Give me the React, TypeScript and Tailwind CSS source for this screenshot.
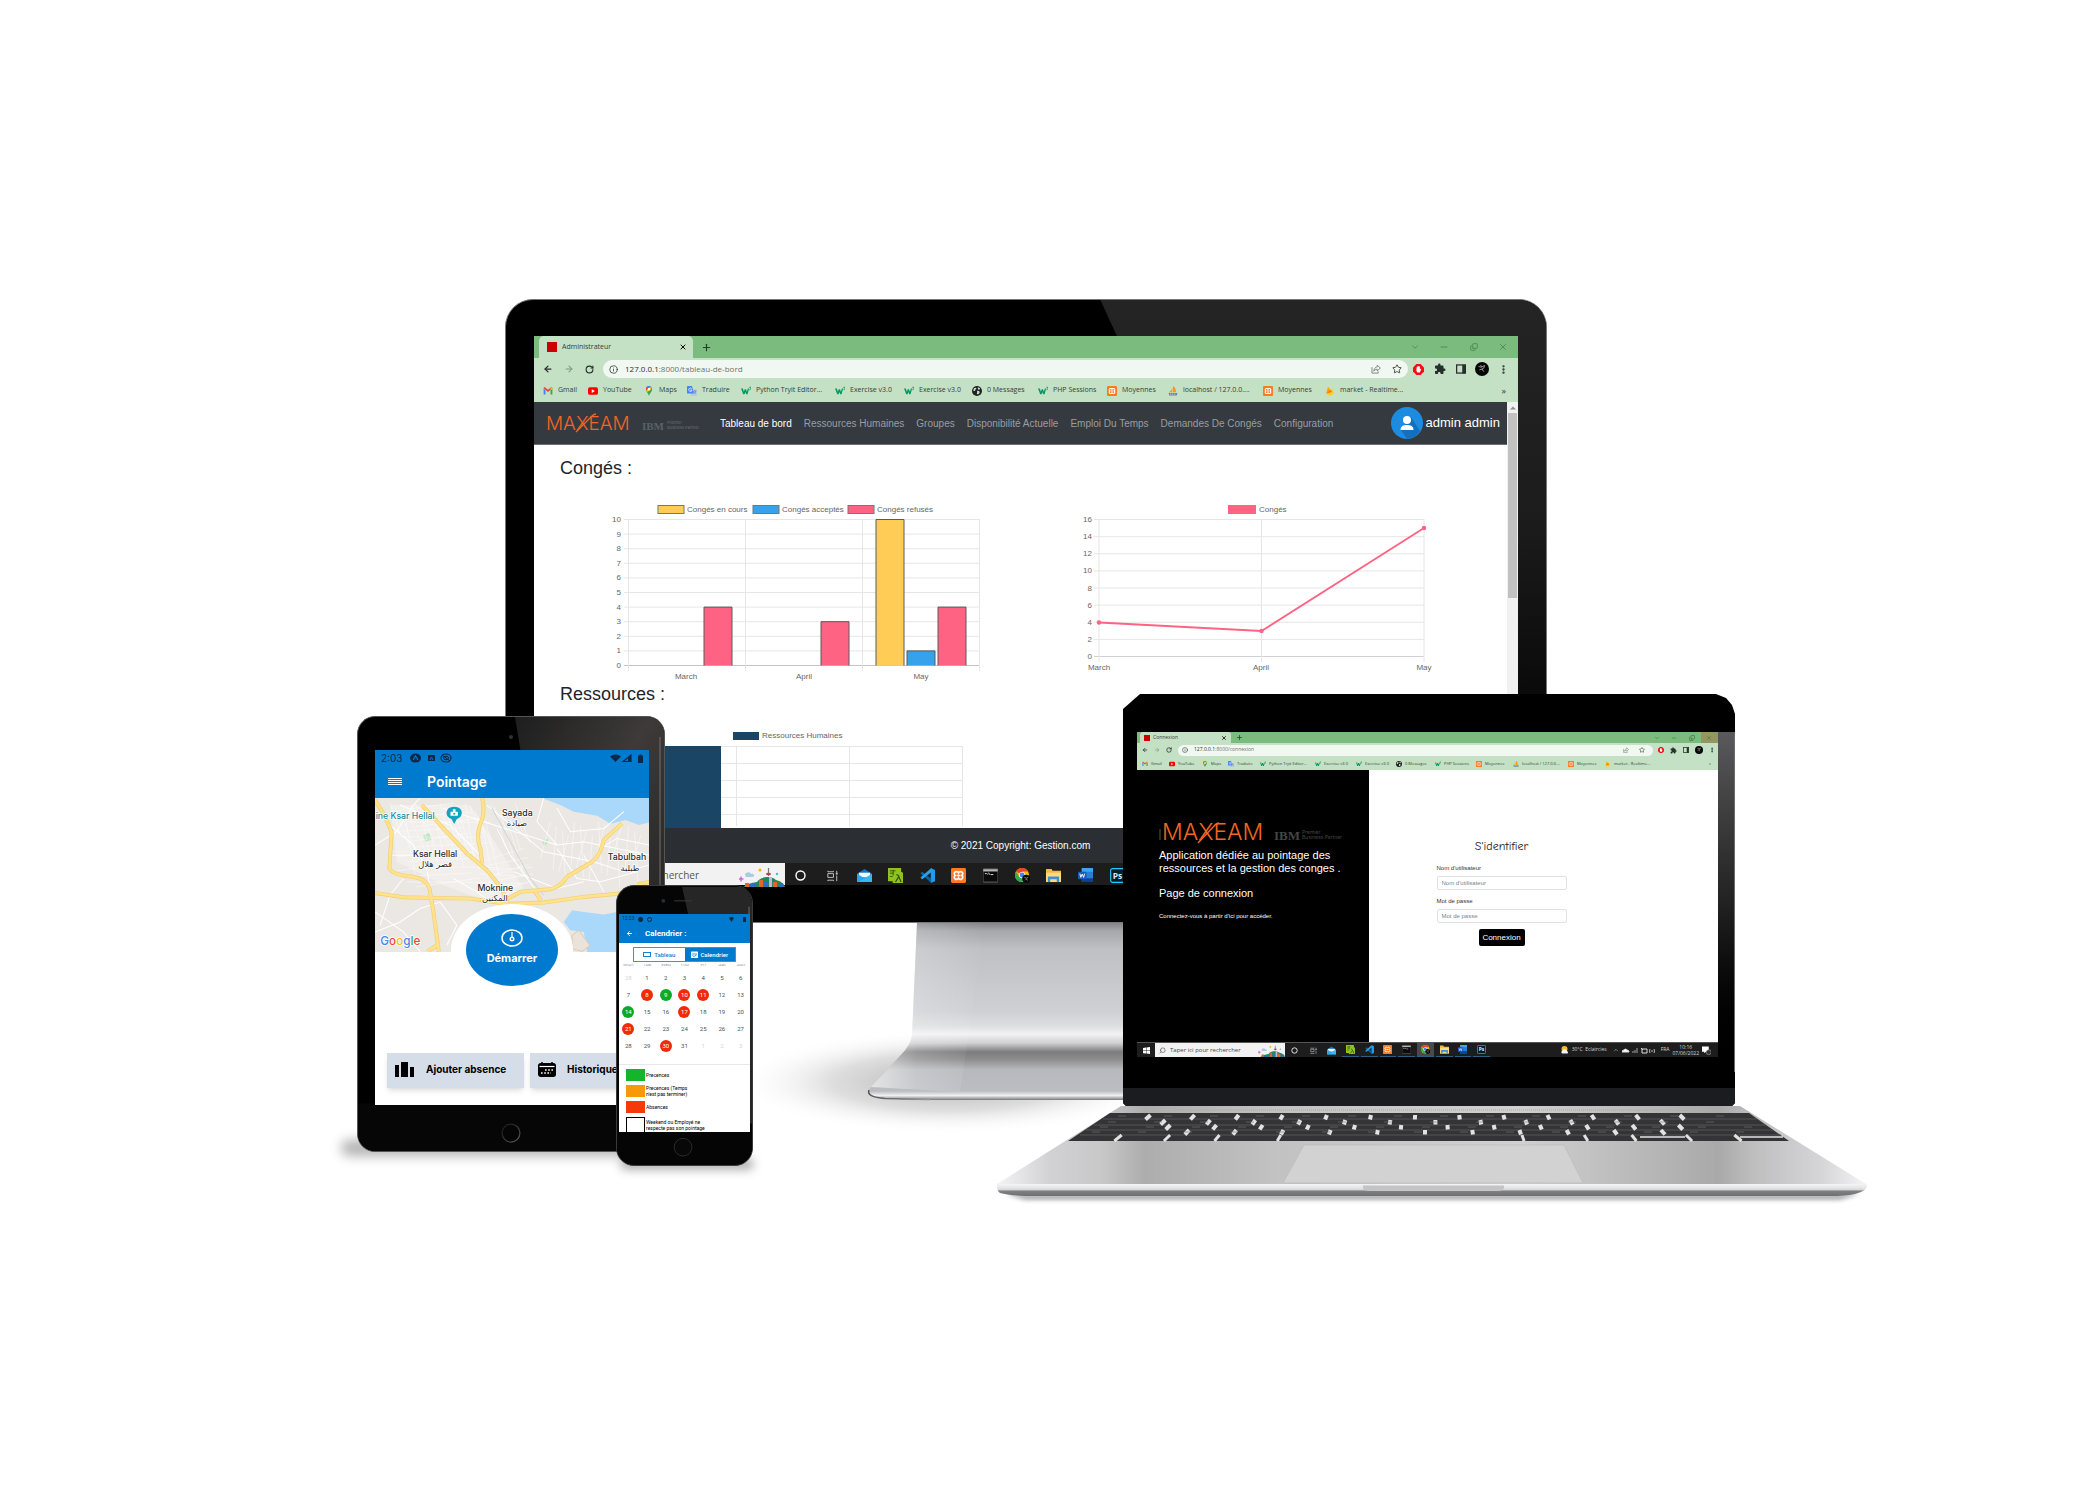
import React from "react";
import {
  ArrowLeft,
  ArrowRight,
  ChevronDown,
  ChevronUp,
  Copy,
  Info,
  Minus,
  MoreVertical,
  Plus,
  RotateCw,
  Search,
  Star,
  X,
} from "lucide-react";
import { MdExtension } from "react-icons/md";

/* ------------------------------------------------------------------ */
/* Small icons                                                         */
/* ------------------------------------------------------------------ */

type IconProps = { className?: string };

const Gmail = ({ className }: IconProps) => (
  <svg viewBox="0 0 16 16" className={className} aria-hidden="true">
    <path d="M1 3.500v10h3V7z" fill="#4285f4" />
    <path d="M15 3.500v10h-3V7z" fill="#34a853" />
    <path d="M1 3.400C1 2 2.600 1.500 3.600 2.300L8 5.800l4.400-3.500C13.400 1.500 15 2 15 3.400L8 9.600z" fill="#ea4335" />
    <path d="M12 3v4l3-2.500V3.400C15 2 13 1.800 12 3z" fill="#fbbc04" />
  </svg>
);

const Youtube = ({ className }: IconProps) => (
  <svg viewBox="0 0 16 16" className={className} aria-hidden="true">
    <rect x="0" y="2" width="16" height="12" rx="3" fill="#f00" />
    <path d="M6 5l5 3-5 3z" fill="#fff" />
  </svg>
);

const Maps = ({ className }: IconProps) => (
  <svg viewBox="0 0 16 16" className={className} aria-hidden="true">
    <path d="M8 0a5 5 0 0 0-5 5c0 4 4 6 5 11 1-5 5-7 5-11a5 5 0 0 0-5-5z" fill="#34a853" />
    <path d="M8 0a5 5 0 0 0-4 2l3 3 4-4.200A5 5 0 0 0 8 0z" fill="#4285f4" />
    <path d="M4 2a5 5 0 0 0-.5 5l3.500-2.500z" fill="#ea4335" />
    <path d="M3.500 7l2 3L12.500 3l-1.500-2.200z" fill="#fbbc04" />
    <circle cx="8" cy="5" r="2" fill="#fff" />
  </svg>
);

const Translate = ({ className }: IconProps) => (
  <svg viewBox="0 0 16 16" className={className} aria-hidden="true">
    <rect x="6" y="5" width="10" height="11" rx="1" fill="#b7c8e8" />
    <path d="M1 0h7l3 12H1a1 1 0 0 1-1-1V1a1 1 0 0 1 1-1z" fill="#4285f4" />
    <path d="M7.500 4.500A2.600 2.600 0 1 0 8 6.500H5.500" fill="none" stroke="#fff" strokeWidth="1.200" />
    <path d="M10 8h5M12.500 7v1M14 8c-.5 2-2 3.500-3 4M11 9l3 3.500" stroke="#5b6f95" strokeWidth=".8" fill="none" />
  </svg>
);

const W3 = ({ className }: IconProps) => (
  <svg viewBox="0 0 16 16" className={className} aria-hidden="true">
    <path d="M0 4h3l1.600 5L6 5h2l1.400 4L11 4h2l-2.500 9H8.300L7 9.500 5.700 13H3.500z" fill="#059862" />
    <path d="M13 2h3l-1.200 1.600C16 4 16 6.500 13.300 6" fill="none" stroke="#059862" strokeWidth="1.200" />
  </svg>
);

const DarkGlobe = ({ className }: IconProps) => (
  <svg viewBox="0 0 16 16" className={className} aria-hidden="true">
    <circle cx="8" cy="8" r="8" fill="#202124" />
    <path d="M3 4c2-2 4-1 4 0s-2 1-2 3-2 1-3 0zM9 2c3 0 4 2 4 3l-3 1zM8 8c3-1 5 1 4 3s-3 3-4 2 1-2 0-5z" fill="#c5e1c5" />
  </svg>
);

const Xampp = ({ className }: IconProps) => (
  <svg viewBox="0 0 16 16" className={className} aria-hidden="true">
    <rect width="16" height="16" rx="1.500" fill="#fb7a24" />
    <path
      d="M4.500 4.300c1.500-1 3 0 3.500 1 .5-1 2-2 3.500-1s1.300 2.700 0 3.700c1.300 1 1.500 2.700 0 3.700s-3 0-3.500-1c-.5 1-2 2-3.500 1s-1.300-2.700 0-3.700c-1.300-1-1.500-2.700 0-3.700zM6 8h4"
      fill="none"
      stroke="#fff"
      strokeWidth="1.700"
    />
  </svg>
);

const PhpMyAdmin = ({ className }: IconProps) => (
  <svg viewBox="0 0 16 16" className={className} aria-hidden="true">
    <path d="M7 2v8H1c3-1 5-4 6-8zM8 0c4 2 5 6 5 10H8z" fill="#f89c0e" />
    <path d="M1 11h14l-1 4H2z" fill="#6c78af" />
    <path d="M3 13h10" stroke="#fff" strokeWidth="1" strokeDasharray="2 1" />
  </svg>
);

const Firebase = ({ className }: IconProps) => (
  <svg viewBox="0 0 16 16" className={className} aria-hidden="true">
    <path d="M2 12L5 1l4 5 2-3 3 9-6 4z" fill="#ffca28" />
    <path d="M2 12L5 1l5 9z" fill="#ffa000" />
    <path d="M2 12l7-6 2 3z" fill="#f57c00" />
  </svg>
);

const Adblock = ({ className }: IconProps) => (
  <svg viewBox="0 0 16 16" className={className} aria-hidden="true">
    <path d="M5 0h6l5 5v6l-5 5H5l-5-5V5z" fill="#f40d12" />
    <path d="M5 5.500c0-1 1-1 1 0V4c0-1 1.300-1 1.300 0 0-1.300 1.400-1.300 1.400 0 0-1 1.300-1 1.300 0v4l1-1c1-.5 1.300.3.8 1L10 12.500H6.500L5 10z" fill="#fff" />
  </svg>
);

const SharePage = ({ className }: IconProps) => (
  <svg viewBox="0 0 16 16" className={className} fill="none" stroke="currentColor" strokeWidth="1.300" aria-hidden="true">
    <path d="M1.500 5v9.500h10V12" />
    <path d="M10 2l5 4.500-5 4.500V8.500C7 8.500 5.500 9.500 4.500 11.500 4.800 8 6.500 5 10 4.500z" />
  </svg>
);

const SidePanel = ({ className }: IconProps) => (
  <svg viewBox="0 0 16 16" className={className} aria-hidden="true">
    <rect x="1" y="1.500" width="14" height="13" fill="none" stroke="currentColor" strokeWidth="2" />
    <path d="M10 1h5v14h-5z" fill="currentColor" />
  </svg>
);

const Avatar = ({ className }: IconProps) => (
  <svg viewBox="0 0 16 16" className={className} aria-hidden="true">
    <circle cx="8" cy="8" r="8" fill="#050505" />
    <path d="M4 5l3 1 4-2-1 3-2 1 2 3M5 9l3-1M6 4l2 1" stroke="#bdbdbd" strokeWidth=".9" fill="none" />
  </svg>
);

const Mail = () => (
  <svg viewBox="0 0 16 16" className="size-full" aria-hidden="true">
    <path d="M0 6l8-5 8 5v9H0z" fill="#1173c7" />
    <path d="M2 5h12v5H2z" fill="#f5f5f5" />
    <path d="M0 6l8 5-8 4z" fill="#28a8ea" />
    <path d="M16 6l-8 5-8 4h16z" fill="#35b8f1" />
  </svg>
);

const Notepad = () => (
  <svg viewBox="0 0 16 16" className="size-full" aria-hidden="true">
    <path d="M0 0h14v4l2 1v11H5v-2H0z" fill="#8fc31f" />
    <path d="M2 3h6M2 5.500h4M2 9h3M5.500 2v6" stroke="#33551a" strokeWidth="1" />
    <path d="M9 7l2 1 3 7M11 10l-3 5" stroke="#2c4a12" strokeWidth="1.200" fill="none" />
  </svg>
);

const VsCode = () => (
  <svg viewBox="0 0 16 16" className="size-full" aria-hidden="true">
    <path d="M11.500 0L16 2v12l-4.500 2z" fill="#1f9cf0" />
    <path d="M1 5l1.500-1L12 11.500V16L.5 5.800z" fill="#0065a9" />
    <path d="M1 11l1.500 1L12 4.500V0L.5 10.200z" fill="#2b9fe8" />
  </svg>
);

const Terminal = () => (
  <svg viewBox="0 0 16 16" className="size-full" aria-hidden="true">
    <rect y="1" width="16" height="14" rx="1" fill="#0b0b0b" stroke="#8a8a8a" strokeWidth=".7" />
    <rect x=".3" y="1.300" width="15.400" height="2.400" fill="#b5b5b5" />
    <path d="M2 6h2M5 6v1M6 5l1 2M8 7h3" stroke="#e5e5e5" strokeWidth="1" />
  </svg>
);

const Chrome = () => (
  <svg viewBox="0 0 16 16" className="size-full" aria-hidden="true">
    <circle cx="7.500" cy="7.500" r="7.500" fill="#fbbc04" />
    <path d="M7.500 7.500L1 3.700A7.500 7.500 0 0 1 14 3.800H7.500z" fill="#ea4335" />
    <path d="M1 3.700A7.500 7.500 0 0 0 7.500 15l3-5.500-6 0z" fill="#34a853" />
    <circle cx="7.500" cy="7.500" r="3.300" fill="#fff" />
    <circle cx="7.500" cy="7.500" r="2.600" fill="#4285f4" />
    <circle cx="12" cy="11.500" r="4.300" fill="#0a0a0a" />
    <path d="M10 10l2 1 2-1M11 13l1-1 1.500 1" stroke="#c4c4c4" strokeWidth=".7" fill="none" />
  </svg>
);

const Explorer = () => (
  <svg viewBox="0 0 16 16" className="size-full" aria-hidden="true">
    <path d="M0 1h6l1 2h9v12H0z" fill="#f5b73c" />
    <path d="M0 5h16v10H0z" fill="#ffdc7a" />
    <path d="M2 9h12v6h-2.500v-3h-7v3H2z" fill="#3d8fd6" />
  </svg>
);

const Word = () => (
  <svg viewBox="0 0 16 16" className="size-full" aria-hidden="true">
    <rect x="4" y="0" width="12" height="15" rx="1" fill="#2b7cd3" />
    <path d="M4 0h12v4H4z" fill="#41a5ee" />
    <path d="M4 11h12v4H4z" fill="#103f91" />
    <rect x="0" y="4" width="9" height="8" rx="1" fill="#185abd" />
    <path d="M2 6l1 4 1.500-3.500L6 10l1-4" stroke="#fff" strokeWidth="1" fill="none" />
  </svg>
);

const Photoshop = () => (
  <svg viewBox="0 0 16 16" className="size-full" aria-hidden="true">
    <rect x=".7" y=".7" width="14.600" height="14.600" rx="2" fill="#061e26" stroke="#26c9ff" strokeWidth="1.200" />
    <text x="8" y="11.500" textAnchor="middle" fontSize="9" fontWeight="700" fill="#cdefff" fontFamily="Open Sans, sans-serif">
      Ps
    </text>
  </svg>
);

const TaskRing = () => (
  <svg viewBox="0 0 16 16" className="size-full" aria-hidden="true">
    <circle cx="8" cy="8" r="4.800" fill="none" stroke="#fff" strokeWidth="1.500" />
  </svg>
);

const TaskView = () => (
  <svg viewBox="0 0 16 16" className="size-full" aria-hidden="true">
    <path d="M3 3v1h6V3M3 14v-1h6v1M3 6h6v4H3zM12.500 3v2M12.500 8v6" fill="none" stroke="#c4c4c4" strokeWidth="1" />
    <path d="M11.500 5h2v2h-2z" fill="#c4c4c4" />
  </svg>
);

const City = ({ className }: IconProps) => (
  <svg viewBox="0 0 46 22" className={className} aria-hidden="true">
    <path d="M4 22c4-3 8-4 14-5 3-5 13-7 19-2 4 1 8 3 9 7z" fill="#23875a" />
    <path d="M6 18h4v4H6zM20 15h4v7h-4zM34 17h4v5h-4z" fill="#e8622c" />
    <path d="M11 19h5v3h-5zM25 17h3v5h-3zM40 18h4v4h-4z" fill="#2a6fc4" />
    <path d="M30 12h3v10h-3z" fill="#c9b3dc" />
    <path d="M29.500 3v8" stroke="#79767c" strokeWidth="1.200" />
    <ellipse cx="29.500" cy="9" rx="2.500" ry="1.200" fill="#b0454f" />
    <path d="M6 10c0-3 5-4 6-1 3-1 4 2 2 3H7z" fill="#aacbe3" />
    <path d="M2 11.500v5M-.5 14h5" stroke="#cc66dd" strokeWidth="1.500" />
    <circle cx="21" cy="5" r="1.500" fill="#f5b400" />
    <circle cx="38" cy="9" r="1.200" fill="#37c7c4" />
  </svg>
);

/* ------------------------------------------------------------------ */
/* Browser chrome and task bar                                         */
/* ------------------------------------------------------------------ */

type Bookmark = {
  label: string;
  Icon: (p: IconProps) => React.ReactElement;
  big: string;
  small: string;
};

const bookmarks: Bookmark[] = [
  { label: "Gmail", Icon: Gmail, big: "w-[45px]", small: "w-[27px]" },
  { label: "YouTube", Icon: Youtube, big: "w-[56px]", small: "w-[33px]" },
  { label: "Maps", Icon: Maps, big: "w-[43px]", small: "w-[26px]" },
  { label: "Traduire", Icon: Translate, big: "w-[54px]", small: "w-[32px]" },
  { label: "Python Tryit Editor...", Icon: W3, big: "w-[94px]", small: "w-[55px]" },
  { label: "Exercise v3.0", Icon: W3, big: "w-[69px]", small: "w-[41px]" },
  { label: "Exercise v3.0", Icon: W3, big: "w-[68px]", small: "w-[40px]" },
  { label: "0 Messages", Icon: DarkGlobe, big: "w-[66px]", small: "w-[39px]" },
  { label: "PHP Sessions", Icon: W3, big: "w-[69px]", small: "w-[41px]" },
  { label: "Moyennes", Icon: Xampp, big: "w-[61px]", small: "w-[37px]" },
  { label: "localhost / 127.0.0....", Icon: PhpMyAdmin, big: "w-[95px]", small: "w-[55px]" },
  { label: "Moyennes", Icon: Xampp, big: "w-[62px]", small: "w-[37px]" },
  { label: "market - Realtime...", Icon: Firebase, big: "w-[90px]", small: "w-[54px]" },
];

function BrowserChrome({ title, path, small }: { title: string; path: string; small?: boolean }) {
  const icon = small ? "size-[6px] shrink-0" : "size-[10px] shrink-0";
  return (
    <header className="font-['Open_Sans',sans-serif] text-[#344036]">
      <div className={small ? "flex h-[11px] bg-[#7bbb7d] pl-[3px]" : "flex h-[22px] bg-[#7bbb7d] pl-[5px]"}>
        <div
          className={
            small
              ? "flex w-[91px] items-center gap-[3px] rounded-t-[3px] bg-[#c5e1c5] pl-1 pr-1 text-[5px]"
              : "flex w-[154px] items-center gap-[5px] rounded-t-[5px] bg-[#c5e1c5] pl-2 pr-1 text-[7px]"
          }
        >
          <span className={small ? "size-[6px] bg-[#cc0000]" : "size-[10px] bg-[#cc0000]"} />
          <span className="flex-1">{title}</span>
          <button aria-label="Fermer l'onglet" className={small ? "text-black" : "pr-[2px] text-black"}>
            <X className={small ? "size-[6px]" : "size-[8px]"} strokeWidth={3} />
          </button>
        </div>
        <button aria-label="Nouvel onglet" className={small ? "pl-[5px] text-[#20402a]" : "pl-2 text-[#20402a]"}>
          <Plus className={small ? "size-[7px]" : "size-[11px]"} strokeWidth={2.5} />
        </button>
        <div
          className={
            small
              ? "ml-auto grid w-[70px] grid-cols-4 place-items-center text-[#3f7042]"
              : "ml-auto grid w-[118px] grid-cols-4 place-items-center text-[#4c8650]"
          }
        >
          <button aria-label="Onglets"><ChevronDown className={small ? "size-[6px]" : "size-[10px]"} /></button>
          <button aria-label="Réduire"><Minus className={small ? "size-[6px]" : "size-[10px]"} /></button>
          <button aria-label="Restaurer"><Copy className={small ? "size-[6px] -scale-y-100" : "size-[8px] -scale-y-100"} strokeWidth={2.5} /></button>
          <button
            aria-label="Fermer"
            className={small ? "grid size-full place-items-center bg-[#93965e]" : "grid size-full place-items-center"}
          >
            <X className={small ? "size-[6px]" : "size-[10px]"} />
          </button>
        </div>
      </div>

      <div
        className={
          small
            ? "flex h-[14px] items-center bg-[#c5e1c5] pl-[5px] text-[#26302a]"
            : "flex h-[22px] items-center bg-[#c5e1c5] pl-[9px] text-[#26302a]"
        }
      >
        <div className={small ? "flex w-[36px] gap-[6px]" : "flex w-[60px] gap-[11px]"}>
          <button aria-label="Précédent"><ArrowLeft className={small ? "size-[6px]" : "size-[10px]"} strokeWidth={3} /></button>
          <button aria-label="Suivant" className="text-[#7d977f]"><ArrowRight className={small ? "size-[6px]" : "size-[10px]"} strokeWidth={2.5} /></button>
          <button aria-label="Actualiser"><RotateCw className={small ? "size-[6px]" : "size-[9px]"} strokeWidth={3} /></button>
        </div>
        <div
          className={
            small
              ? "flex h-[11px] flex-1 items-center gap-[6px] rounded-full bg-[#f1f8f1] px-1 text-[5px]"
              : "flex h-[18px] flex-1 items-center gap-[7px] rounded-full bg-[#f1f8f1] px-[6px] text-[8px]"
          }
        >
          <Info className={small ? "size-[6px]" : "size-[9px]"} />
          <span className="flex-1 text-[#6d746e]">
            <span className="text-[#2a322b]">127.0.0.1</span>
            {path}
          </span>
          <SharePage className={small ? "size-[6px] text-[#6b736c]" : "size-[10px] text-[#6b736c]"} />
          <Star className={small ? "mx-1 size-[6px]" : "ml-1 size-[10px]"} />
        </div>
        <div
          className={
            small
              ? "grid w-[65px] grid-cols-5 place-items-center pl-[2px]"
              : "grid w-[110px] grid-cols-5 place-items-center pr-1"
          }
        >
          <Adblock className={small ? "size-[6px]" : "size-[11px]"} />
          <MdExtension className={small ? "size-[7px]" : "size-[12px]"} />
          <SidePanel className={small ? "size-[6px]" : "size-[10px]"} />
          <Avatar className={small ? "size-[8px]" : "size-[14px]"} />
          <MoreVertical className={small ? "size-[6px]" : "size-[11px]"} strokeWidth={3} />
        </div>
      </div>

      <nav
        aria-label="Favoris"
        className={
          small
            ? "flex h-[13px] items-center bg-[#c5e1c5] pl-[5px] text-[4px]"
            : "flex h-[22px] items-center bg-[#c5e1c5] pb-px pl-[9px] text-[7px]"
        }
      >
        {bookmarks.map(({ label, Icon, big, small: narrow }, i) => (
          <a
            key={i}
            href="#"
            className={`flex shrink-0 items-center whitespace-nowrap ${small ? "gap-[3px]" : "gap-[5px]"} ${small ? narrow : big}`}
          >
            <Icon className={icon} />
            {label}
          </a>
        ))}
        <span className={small ? "ml-auto pr-[7px]" : "ml-auto pr-3 text-[9px]"}>»</span>
      </nav>
    </header>
  );
}

const apps = [
  TaskRing,
  TaskView,
  Mail,
  Notepad,
  VsCode,
  () => <Xampp className="size-full" />,
  Terminal,
  Chrome,
  Explorer,
  Word,
  Photoshop,
];

function WindowsLogo() {
  return (
    <svg viewBox="0 0 16 16" className="size-[7px]" aria-label="Démarrer">
      <path d="M0 2l7-1v6.500H0zM8 1l8-1v7.500H8zM0 8.500h7V15l-7-1zM8 8.500h8V16l-8-1z" fill="#fff" />
    </svg>
  );
}

/* ------------------------------------------------------------------ */
/* Dashboard on the monitor                                            */
/* ------------------------------------------------------------------ */

function Logo({ small }: { small?: boolean }) {
  return small ? (
    <svg viewBox="0 0 190 26" className="h-[26px] w-[190px]" role="img" aria-label="MAXEAM">
      <path d="M1 9v11" stroke="#555" strokeWidth="1" />
      <text x="3" y="20" fontSize="23" fontWeight="300" fill="#f26522" fontFamily="Inter, sans-serif">MAXEAM</text>
      <path d="M39 23L56 5Q58 3 60 3" stroke="#f26522" strokeWidth="1.500" fill="none" />
      <text x="115" y="20" fontSize="13" fontWeight="700" fill="#444" fontFamily="Liberation Serif, serif">IBM</text>
      <text x="143" y="14" fontSize="5" fill="#444" fontFamily="Inter, sans-serif">Premier</text>
      <text x="143" y="19" fontSize="5" fill="#444" fontFamily="Inter, sans-serif">Business Partner</text>
    </svg>
  ) : (
    <svg viewBox="0 0 157 22" className="h-[22px] w-[157px]" role="img" aria-label="MAXEAM">
      <text x="0" y="18" fontSize="19" fontWeight="300" fill="#f26522" fontFamily="Inter, sans-serif">MAXEAM</text>
      <path d="M30 20L46 4Q48 2 50 2" stroke="#f26522" strokeWidth="1.300" fill="none" />
      <text x="96" y="18" fontSize="11" fontWeight="700" fill="#5c6168" fontFamily="Liberation Serif, serif">IBM</text>
      <text x="121" y="12" fontSize="4" fill="#6a6f75" fontFamily="Inter, sans-serif">Premier</text>
      <text x="121" y="17" fontSize="4" fill="#6a6f75" fontFamily="Inter, sans-serif">Business Partner</text>
    </svg>
  );
}

const menu = [
  "Ressources Humaines",
  "Groupes",
  "Disponibilité Actuelle",
  "Emploi Du Temps",
  "Demandes De Congés",
  "Configuration",
];

const grid = "#e6e6e6";

function BarChart() {
  const rows = [0, 1, 2, 3, 4, 5, 6, 7, 8, 9, 10];
  const bars = [
    { x: 704, v: 4, c: "#ff6384" },
    { x: 821, v: 3, c: "#ff6384" },
    { x: 876, v: 10, c: "#ffcd56" },
    { x: 907, v: 1, c: "#36a2eb" },
    { x: 938, v: 4, c: "#ff6384" },
  ];
  const legend = [
    { x: 658, c: "#ffcd56", t: "Congés en cours" },
    { x: 753, c: "#36a2eb", t: "Congés acceptés" },
    { x: 848, c: "#ff6384", t: "Congés refusés" },
  ];
  return (
    <svg viewBox="600 480 400 202" className="h-[202px] w-[400px] shrink-0" fontFamily="Liberation Sans, sans-serif" fontSize="8" fill="#666">
      {legend.map((l) => (
        <g key={l.t}>
          <rect x={l.x} y="505.500" width="26" height="8" fill={l.c} stroke="#777" />
          <text x={l.x + 29} y="512">{l.t}</text>
        </g>
      ))}
      {rows.map((r) => (
        <g key={r}>
          <path d={`M624 ${665.5 - r * 14.6}H980`} stroke={r ? grid : "#c4c4c4"} />
          <text x="621" y={668 - r * 14.6} textAnchor="end">{r}</text>
        </g>
      ))}
      {[628.5, 745.5, 862.5, 979.5].map((x) => (
        <path key={x} d={`M${x} 519V671`} stroke={grid} />
      ))}
      {bars.map((b) => (
        <path
          key={b.x}
          d={`M${b.x} 665.500V${665.5 - b.v * 14.6}h28V665.500`}
          fill={b.c}
          stroke="#5a5a5a"
        />
      ))}
      <g textAnchor="middle">
        <text x="686" y="679">March</text>
        <text x="804" y="679">April</text>
        <text x="921" y="679">May</text>
      </g>
    </svg>
  );
}

function LineChart() {
  return (
    <svg viewBox="1070 480 390 202" className="h-[202px] w-[390px] shrink-0" fontFamily="Liberation Sans, sans-serif" fontSize="8" fill="#666">
      <rect x="1228" y="505" width="28" height="9" fill="#ff6384" />
      <text x="1259" y="512">Congés</text>
      {[0, 2, 4, 6, 8, 10, 12, 14, 16].map((r) => (
        <g key={r}>
          <path d={`M1094 ${656.5 - r * 8.56}H1424`} stroke={r ? grid : "#d0d0d0"} />
          <text x="1092" y={659 - r * 8.56} textAnchor="end">{r}</text>
        </g>
      ))}
      {[1099, 1261.5, 1424].map((x) => (
        <path key={x} d={`M${x} 519V662`} stroke={grid} />
      ))}
      <path d="M1099 622.500L1261.500 631L1424 528" fill="none" stroke="#ff6384" strokeWidth="1.800" />
      <circle cx="1099" cy="622.500" r="2.200" fill="#ff6384" />
      <circle cx="1261.500" cy="631" r="2.200" fill="#ff6384" />
      <circle cx="1424" cy="528" r="2.200" fill="#ff6384" />
      <g textAnchor="middle">
        <text x="1099" y="670">March</text>
        <text x="1261" y="670">April</text>
        <text x="1424" y="670">May</text>
      </g>
    </svg>
  );
}

function ResourceChart() {
  return (
    <svg viewBox="600 706 400 122" className="h-[122px] w-[400px]" fontFamily="Liberation Sans, sans-serif" fontSize="8" fill="#666">
      <rect x="733" y="732" width="26" height="8" fill="#1b4565" />
      <text x="762" y="738">Ressources Humaines</text>
      {[746.5, 763.5, 780.5, 797.5, 814.5].map((y) => (
        <path key={y} d={`M624 ${y}H962`} stroke={grid} />
      ))}
      {[736.5, 849.5, 962.5].map((x) => (
        <path key={x} d={`M${x} 746V826`} stroke={grid} />
      ))}
      <rect x="639" y="746" width="82" height="82" fill="#1b4565" />
    </svg>
  );
}

function Dashboard() {
  return (
    <div className="flex min-h-0 flex-1">
      <div className="flex min-w-0 flex-1 flex-col bg-white font-['Liberation_Sans',sans-serif]">
        <nav className="flex h-[43px] items-center border-b border-[#6b6f73] bg-[#343a40] pl-3 pr-[7px] text-[10px] text-[#9a9da0]">
          <a href="#" className="mr-[17px]"><Logo /></a>
          <div className="flex gap-3 whitespace-nowrap">
            <a href="#" className="text-white">Tableau de bord</a>
            {menu.map((m) => (
              <a key={m} href="#">{m}</a>
            ))}
          </div>
          <a href="#" className="ml-auto flex items-center gap-[3px] whitespace-nowrap text-[13px] text-white">
            <svg viewBox="0 0 32 32" className="size-8" aria-hidden="true">
              <circle cx="16" cy="16" r="16" fill="#1d8ce0" />
              <path d="M20 10l9 14a16 16 0 0 1-13 8l-6-9z" fill="#1470bc" />
              <circle cx="16" cy="13" r="4" fill="#fff" />
              <path d="M9.500 23c0-4 3-5 6.500-5s6.500 1 6.500 5z" fill="#fff" />
            </svg>
            admin admin
          </a>
        </nav>
        <main className="min-h-0 flex-1 overflow-hidden pt-[11px] text-[#212529]">
          <h2 className="pl-[26px] text-[18px] leading-6">Congés :</h2>
          <div className="flex gap-[70px] pl-[66px]">
            <BarChart />
            <LineChart />
          </div>
          <h2 className="pl-[26px] text-[18px] leading-6">Ressources :</h2>
          <div className="pl-[66px]">
            <ResourceChart />
          </div>
        </main>
        <footer className="flex h-[35px] items-center justify-center bg-[#2b2f34] text-[10px] text-white">
          © 2021 Copyright: Gestion.com
        </footer>
      </div>
      <div className="flex w-[11px] flex-col bg-[#f1f1f1]">
        <span className="grid h-[11px] place-items-center">
          <svg viewBox="0 0 8 8" className="size-[6px]"><path d="M0 6l4-4 4 4z" fill="#8b8b8b" /></svg>
        </span>
        <span className="mx-px h-[185px] bg-[#c1c1c1]" />
      </div>
    </div>
  );
}

function Monitor() {
  return (
    <section aria-label="Écran administrateur" className="absolute left-[275px] top-px h-[624px] w-[1042px] overflow-hidden rounded-[28px] rounded-b-none border border-[#777] bg-black">
      <svg viewBox="0 0 1041 624" className="absolute inset-0 size-full" preserveAspectRatio="none" aria-hidden="true">
        <defs>
          <linearGradient id="monitorGlare" x1="0" y1="0" x2="0" y2="1">
            <stop offset="0" stopColor="#242424" />
            <stop offset=".35" stopColor="#1c1c1c" />
            <stop offset=".65" stopColor="#090909" />
            <stop offset="1" stopColor="#000" />
          </linearGradient>
        </defs>
        <path d="M595 0H1041V624H880z" fill="url(#monitorGlare)" />
        <path d="M0 585H1010V624H0z" fill="#000" />
      </svg>
      <div className="relative ml-[28px] mr-[28px] mt-[36px] flex h-[549px] flex-col bg-white">
        <BrowserChrome title="Administrateur" path=":8000/tableau-de-bord" />
        <Dashboard />
        <div className="flex h-[22px] bg-[#1d1d1d]">
          <label className="flex w-[251px] items-center justify-end gap-[40px] bg-[#f2f2f2] pt-[3px] font-['Open_Sans',sans-serif] text-[10px] text-[#555]">
            <span className="whitespace-nowrap">Taper ici pour rechercher</span>
            <City className="h-[22px] w-[46px]" />
          </label>
          <div className="grid w-[348px] grid-cols-11 place-items-center pt-[3px]">
            {apps.map((App, i) => (
              <span key={i} className="size-[15px]"><App /></span>
            ))}
          </div>
        </div>
      </div>
    </section>
  );
}

function Stand() {
  return (
    <svg viewBox="700 920 450 230" className="absolute left-[470px] top-[622px] h-[230px] w-[450px]" aria-hidden="true">
      <defs>
        <linearGradient id="standBody" x1="0" y1="0" x2="0" y2="1">
          <stop offset="0" stopColor="#7f8084" />
          <stop offset=".05" stopColor="#a6a7ab" />
          <stop offset=".15" stopColor="#bfc0c4" />
          <stop offset=".5" stopColor="#cfd0d4" />
          <stop offset=".58" stopColor="#dcdde0" />
          <stop offset=".63" stopColor="#f2f2f4" />
          <stop offset=".68" stopColor="#d0d0d2" />
          <stop offset=".73" stopColor="#7c7c7e" />
          <stop offset=".77" stopColor="#8c8c8f" />
          <stop offset=".83" stopColor="#b8b9bd" />
          <stop offset=".95" stopColor="#bcbdc2" />
          <stop offset=".975" stopColor="#f0f0f2" />
          <stop offset="1" stopColor="#77787b" />
        </linearGradient>
        <linearGradient id="standSheen" x1="0" y1="0" x2="1" y2="0">
          <stop offset="0" stopColor="#fff" stopOpacity=".6" />
          <stop offset=".4" stopColor="#fff" stopOpacity=".2" />
          <stop offset="1" stopColor="#fff" stopOpacity="0" />
        </linearGradient>
        <linearGradient id="standEdge" x1="0" y1="0" x2="1" y2="0">
          <stop offset="0" stopColor="#555" />
          <stop offset="1" stopColor="#999" />
        </linearGradient>
        <radialGradient id="floor">
          <stop offset="0" stopColor="#b5b5b5" />
          <stop offset=".55" stopColor="#dedede" />
          <stop offset="1" stopColor="#fff" stopOpacity="0" />
        </radialGradient>
      </defs>
      <ellipse cx="950" cy="1082" rx="215" ry="52" fill="url(#floor)" />
      <path d="M917 922L912 1035Q911 1045 900 1056L871 1087Q864 1096 880 1098Q905 1100 930 1100H1130V922z" fill="url(#standBody)" />
      <path d="M917 922L912 1035Q911 1045 900 1056L871 1087L960 1092L985 922z" fill="url(#standSheen)" />
      <path d="M869 1090Q866 1097 885 1098.500L930 1099.500" fill="none" stroke="url(#standEdge)" strokeWidth="1.500" />
    </svg>
  );
}

/* ------------------------------------------------------------------ */
/* Tablet                                                              */
/* ------------------------------------------------------------------ */

const minorRoads = [
  "M15 300L80 260L130 180L150 159",
  "M60 240L130 300L170 370L185 456",
  "M90 180L240 240L330 330",
  "M220 190L340 230L560 300L640 290L837 330",
  "M350 180L520 320L670 350",
  "M380 250L420 330L500 440",
  "M15 560L90 530L150 490L210 470",
  "M15 500L100 560L150 619",
  "M210 470L260 540L230 600",
  "M560 190L600 260L700 250L760 200",
  "M560 310L620 400L690 410L800 380",
  "M670 350L760 380L837 360",
  "M640 330L700 440",
  "M430 380L560 430L640 410",
  "M520 160L500 230L560 300",
  "M100 400L60 450L30 540",
  "M250 400L320 440L360 470",
  "M130 330L60 330",
  "M690 310L740 280L837 300",
];

function TownMap() {
  return (
    <svg viewBox="15 159 822 461" className="h-[154px] w-full" preserveAspectRatio="xMinYMin slice" fontFamily="Inter, sans-serif" fontSize="26" fontWeight="500">
      <rect x="15" y="159" width="822" height="461" fill="#ebe7e3" />
      <path d="M60 180h240l80 120 80 130-80 50-160-60-140-70z" fill="#f1eeeb" />
      <path d="M515 159H837V232L805 240L765 225L720 236L680 212L610 200L570 180z" fill="#a9d8fb" />
      <path d="M580 530L605 495L640 500L700 508L740 500L837 520V620H650L640 560L600 555z" fill="#a9d8fb" />
      <path d="M605 570L625 555L658 600L635 618L605 610z" fill="#ebe3d9" stroke="#dccdb8" strokeWidth="3" />
      <path d="M158 272l20-9 10 18-20 10zM515 285l18-3-3 16-10 3z" fill="#bfe5c4" />
      <g fill="none" stroke="#fff" strokeWidth="3">
        {minorRoads.map((d) => (
          <path key={d} d={d} />
        ))}
      </g>
      <g fill="none" stroke="#fff" strokeWidth="1.500" opacity=".9">
        {Array.from({ length: 26 }, (_, i) => (
          <path key={i} d={`M${60 + i * 15} ${175 + (i % 5) * 12}l${30 + (i % 3) * 14} ${90 + (i % 4) * 30}`} />
        ))}
        {Array.from({ length: 16 }, (_, i) => (
          <path key={i} d={`M${60 + (i % 4) * 26} ${200 + i * 15}l${190 + (i % 3) * 30} ${-26 + (i % 3) * 14}`} />
        ))}
        {Array.from({ length: 16 }, (_, i) => (
          <path key={i} d={`M${540 + i * 18} ${230 + (i % 4) * 14}l${-30 + (i % 3) * 20} ${110 + (i % 3) * 22}`} />
        ))}
        {Array.from({ length: 9 }, (_, i) => (
          <path key={i} d={`M${330 + (i % 3) * 14} ${350 + i * 12}l130 ${-40 + (i % 4) * 16}`} />
        ))}
      </g>
      <path d="M365 190L420 290L480 400L520 450" fill="none" stroke="#d3d3d6" strokeWidth="3" />
      {[
        { w: 12, c: "#f3cf6e" },
        { w: 8, c: "#ffe28c" },
      ].map((s) => (
        <g key={s.w} fill="none" stroke={s.c} strokeWidth={s.w} strokeLinejoin="round">
          <path d="M15 165L40 205L65 260L58 370Q70 390 130 395Q170 402 178 430L190 500L206 619" />
          <path d="M15 443L100 456L185 458L300 460L410 476L520 472L640 455L780 442L837 430" />
          <path d="M155 180L215 245L290 325L350 375L395 430L410 476" />
          <path d="M335 159Q345 190 335 225Q315 270 330 310L336 355" />
          <path d="M385 475L450 440L540 432Q570 425 590 395L665 350Q690 330 700 285L755 235" />
          <path d="M492 436L512 466" />
          <path d="M800 418L837 410M206 596L172 619" />
        </g>
      ))}
      <g fill="#2a2a2a" stroke="#fff" strokeWidth="4" paintOrder="stroke" textAnchor="middle">
        <text x="441" y="214">Sayada</text>
        <text x="440" y="242" fontSize="25" fontFamily="DejaVu Sans, sans-serif">صيادة</text>
        <text x="195" y="336">Ksar Hellal</text>
        <text x="195" y="366" fontSize="25" fontFamily="DejaVu Sans, sans-serif">قصر هلال</text>
        <text x="375" y="436">Moknine</text>
        <text x="374" y="466" fontSize="25" fontFamily="DejaVu Sans, sans-serif">المكنين</text>
        <text x="712" y="345" textAnchor="start">Tabulbah</text>
        <text x="778" y="377" fontSize="25" fontFamily="DejaVu Sans, sans-serif">طبلبة</text>
        <text x="17" y="223" textAnchor="start" fill="#1a8a9c">ine Ksar Hellal</text>
      </g>
      <path d="M252 237L244 222Q229 216 229 203Q230 185 252 185Q275 186 275 204Q274 217 260 222z" fill="#12a4bc" />
      <path d="M241 200h22v12h-22zM248 200v-7h8v7" fill="#fff" />
      <circle cx="252" cy="206" r="3" fill="#12a4bc" />
      <text x="31" y="599" fontSize="35" fontWeight="500" stroke="#fff" strokeWidth="4" paintOrder="stroke">
        <tspan fill="#4285f4">G</tspan>
        <tspan fill="#ea4335">o</tspan>
        <tspan fill="#fbbc04">o</tspan>
        <tspan fill="#4285f4">g</tspan>
        <tspan fill="#34a853">l</tspan>
        <tspan fill="#ea4335">e</tspan>
      </text>
    </svg>
  );
}

function StatusIcons() {
  return (
    <svg viewBox="0 0 42 10" className="h-[10px] w-[42px]" aria-hidden="true">
      <ellipse cx="5.500" cy="5" rx="5.500" ry="4.500" fill="#0b2a48" />
      <path d="M3 7l2.500-4L8 7" stroke="#0079d0" strokeWidth="1.200" fill="none" />
      <rect x="18" y="2" width="7" height="6" fill="#0b2a48" />
      <path d="M20 7l1.500-3L23 7" stroke="#0079d0" strokeWidth="1" fill="none" />
      <ellipse cx="36" cy="5" rx="5" ry="4" fill="none" stroke="#0b2a48" strokeWidth="1.200" />
      <ellipse cx="36" cy="5" rx="2.500" ry="1.800" fill="none" stroke="#0b2a48" />
      <path d="M32 2l8 6" stroke="#0b2a48" />
    </svg>
  );
}

function Tablet() {
  return (
    <section aria-label="Tablette" className="absolute left-[127px] top-[418px]">
      <div className="absolute -bottom-1 -left-4 h-4 w-[300px] rounded-full bg-black/30 blur-[6px]" />
      <div className="relative h-[436px] w-[308px] overflow-hidden rounded-[18px] border border-[#555] bg-black px-[17px] pt-[33px]">
        <svg viewBox="0 0 308 436" className="absolute inset-0 size-full" preserveAspectRatio="none" aria-hidden="true">
          <defs>
            <linearGradient id="tabletGlare" x1="0" y1="0" x2=".6" y2="1">
              <stop offset="0" stopColor="#1e1e1e" />
              <stop offset=".4" stopColor="#3d3a39" />
              <stop offset="1" stopColor="#1a1a1a" />
            </linearGradient>
            <linearGradient id="homeRing" x1="0" y1="0" x2="1" y2="1">
              <stop offset="0" stopColor="#141414" />
              <stop offset="1" stopColor="#5a5a5a" />
            </linearGradient>
          </defs>
          <path d="M158 0H308V436H230z" fill="url(#tabletGlare)" />
          <path d="M0 388H308V436H0z" fill="#060606" />
          <circle cx="154" cy="20" r="2" fill="#333" />
          <circle cx="154" cy="418" r="9" fill="#050505" stroke="url(#homeRing)" strokeWidth="1.200" />
          <path d="M304 20V300" stroke="#77716e" strokeWidth="1" />
        </svg>
        <div className="relative flex h-[355px] w-[274px] flex-col overflow-hidden bg-white font-[Inter,sans-serif]">
          <header className="h-[48px] bg-[#007ace] text-white">
            <div className="flex h-4 items-center gap-2 pl-[6px] pr-[5px] text-[10px] text-[#0b2a48]">
              <span>2:03</span>
              <StatusIcons />
              <svg viewBox="0 0 34 9" className="ml-auto h-[9px] w-[34px]" aria-hidden="true">
                <path d="M0 2.500q5.500-4 11 0L5.500 8z" fill="#0b2a48" />
                <path d="M13 7.500L21 1v6.500z" fill="none" stroke="#0b2a48" strokeWidth="1.200" />
                <path d="M18 8V4l3-3v7z" fill="#0b2a48" />
                <path d="M28 1.500h1.500V.5h2v1H33V9h-5z" fill="#0b2a48" />
              </svg>
            </div>
            <div className="flex h-[30px] items-center gap-[25px] pl-[13px]">
              <button aria-label="Menu" className="grid w-[14px] gap-px">
                <span className="h-px bg-white" />
                <span className="h-px bg-white" />
                <span className="h-px bg-white" />
                <span className="h-px bg-white" />
              </button>
              <h1 className="text-[14px] font-semibold">Pointage</h1>
            </div>
          </header>
          <div className="relative h-[255px]">
            <TownMap />
            <div className="absolute left-[76px] top-[106px] grid h-[92px] w-[122px] place-items-center rounded-[50%] bg-white">
              <button className="flex h-[72px] w-[92px] flex-col items-center justify-center rounded-[50%] bg-[#007ace] pb-[6px] text-[11px] font-bold leading-[16px] text-white">
                <svg viewBox="0 0 22 18" className="mb-[3px] h-[18px] w-[22px]" aria-hidden="true">
                  <ellipse cx="11" cy="9" rx="10" ry="8" fill="none" stroke="#fff" strokeWidth="1.500" />
                  <circle cx="11" cy="10" r="2.500" fill="#fff" />
                  <circle cx="11" cy="10" r="1" fill="#007ace" />
                  <path d="M11 3v6" stroke="#fff" strokeWidth="1.200" />
                </svg>
                Démarrer
              </button>
            </div>
          </div>
          <div className="flex gap-[6px] pl-3 text-[10px] font-bold text-black">
            <button className="flex h-[35px] w-[137px] shrink-0 items-center gap-3 whitespace-nowrap bg-[#d5dde9] pb-[2px] pl-2 shadow-md">
              <svg viewBox="0 0 19 15" className="h-[15px] w-[19px]" aria-hidden="true">
                <path d="M0 3h4v12H0zM6 0h7v15H6zM15 5h4v10h-4z" fill="#000" />
              </svg>
              Ajouter absence
            </button>
            <button className="flex h-[35px] w-[137px] shrink-0 items-center gap-[11px] bg-[#d5dde9] pb-[2px] pl-2 shadow-md">
              <svg viewBox="0 0 18 15" className="h-[15px] w-[18px]" aria-hidden="true">
                <rect x=".7" y="1.700" width="16.600" height="12.600" rx="2" fill="#000" stroke="#000" strokeWidth="1.400" />
                <path d="M1.500 4.500h15" stroke="#fff" strokeWidth="1.200" />
                <path d="M7 8h9M3 11h10" stroke="#fff" strokeWidth="1.500" strokeDasharray="1.600 1.600" />
                <path d="M4 0v3M14 0v3" stroke="#000" strokeWidth="1.500" />
              </svg>
              Historique
            </button>
          </div>
        </div>
      </div>
    </section>
  );
}

/* ------------------------------------------------------------------ */
/* Phone                                                               */
/* ------------------------------------------------------------------ */

const weeks = [
  [28, 1, 2, 3, 4, 5, 6],
  [7, 8, 9, 10, 11, 12, 13],
  [14, 15, 16, 17, 18, 19, 20],
  [21, 22, 23, 24, 25, 26, 27],
  [28, 29, 30, 31, 1, 2, 3],
];
const absent = [8, 10, 11, 17, 21, 30];
const present = [9, 14];

function dayClass(day: number, week: number) {
  if ((week === 0 && day > 20) || (week === 4 && day < 20)) return "text-[#d3d7da]";
  if (absent.includes(day) && week > 0) return "rounded-full bg-[#f02b08] text-white";
  if (present.includes(day) && week > 0) return "rounded-full bg-[#0dab25] text-white";
  return "text-[#43515f]";
}

function Phone() {
  return (
    <section aria-label="Téléphone" className="absolute left-[386px] top-[587px]">
      <div className="absolute -bottom-1 left-1 h-3 w-[134px] rounded-full bg-black/30 blur-[5px]" />
      <div className="relative h-[281px] w-[137px] overflow-hidden rounded-[18px] border border-[#3a3a3a] bg-[#050505] px-[2px] pt-[28px]">
        <svg viewBox="0 0 137 281" className="absolute inset-0 size-full" aria-hidden="true">
          <path d="M66 0H137V240H120z" fill="#262626" />
          <path d="M134 20V230" stroke="#4b4b4b" strokeWidth="2" />
          <path d="M0 246H137V281H0z" fill="#050505" />
          <circle cx="47" cy="14" r="2" fill="#22303c" />
          <path d="M58 14H76" stroke="#3b3b3b" strokeWidth="1" />
          <circle cx="67" cy="264" r="9" fill="#080808" stroke="#2c2c2c" />
        </svg>
        <div className="relative h-[218px] w-[131px] overflow-hidden bg-white font-[Roboto,sans-serif]">
          <header className="h-[29px] bg-[#007ace] text-white">
            <div className="flex h-[10px] items-center gap-1 px-[3px] text-[5px] text-[#0b2a48]">
              12:23
              <span className="size-[5px] rounded-full bg-[#0b2a48]" />
              <span className="size-[5px] rounded-full border border-[#0b2a48]" />
              <svg viewBox="0 0 18 5" className="ml-auto h-[5px] w-[18px]" aria-hidden="true">
                <path d="M0 1q2.500-2 5 0L2.500 5zM14 0h3v5h-3z" fill="#0b2a48" />
              </svg>
            </div>
            <div className="flex h-[19px] items-center gap-[12px] pl-[7px]">
              <button aria-label="Retour"><ArrowLeft className="size-[7px]" strokeWidth={3} /></button>
              <h1 className="text-[8px] font-bold">Calendrier :</h1>
            </div>
          </header>
          <div className="mx-auto mt-1 grid h-[15px] w-[103px] grid-cols-2 border border-[#3b93d8] text-[6px] font-medium">
            <button className="flex items-center justify-center gap-[3px] text-[#1c7fcd]">
              <span className="h-[5px] w-[8px] border border-[#1c7fcd]" />
              Tableau
            </button>
            <button className="flex items-center justify-center gap-[2px] bg-[#007ace] text-white">
              <svg viewBox="0 0 14 14" className="size-[7px]" aria-hidden="true">
                <rect y="1" width="14" height="13" rx="1" fill="#fff" />
                <path d="M2 6h10M3 9l3 2 5-3" stroke="#007ace" strokeWidth="1.500" fill="none" />
              </svg>
              Calendrier
            </button>
          </div>
          <div className="mb-[2px] mt-[2px] flex h-[3px] items-end overflow-hidden text-[5px] leading-[5px] text-[#9aa2a8]">
            {["Mon", "Tue", "Wed", "Thu", "Fri", "Sat", "Sun"].map((d) => (
              <span key={d} className="flex-1 text-center">{d}</span>
            ))}
          </div>
          <table className="w-full table-fixed border-collapse text-center text-[6px]">
            <tbody>
              {weeks.map((w, i) => (
                <tr key={i}>
                  {w.map((d, j) => (
                    <td key={j} className="h-[17px] p-0">
                      <span className={`mx-auto grid size-3 place-items-center ${dayClass(d, i)}`}>{d}</span>
                    </td>
                  ))}
                </tr>
              ))}
            </tbody>
          </table>
          <ul className="mt-[10px] grid gap-1 border-t border-[#e8e8e8] pl-[7px] pt-1 text-[5px] leading-[6px] text-black">
            <li className="flex h-3 items-center gap-px"><span className="h-full w-[19px] bg-[#14b52b]" />Precences</li>
            <li className="flex h-3 items-center gap-px"><span className="h-full w-[19px] bg-[#f79a0a]" /><span>Precences (Temps<br />n'est pas terminer)</span></li>
            <li className="flex h-3 items-center gap-px"><span className="h-full w-[19px] bg-[#f43a0a]" />Absences</li>
            <li className="flex h-[17px] gap-px"><span className="h-full w-[19px] border border-black" /><span className="pt-[2px]">Weekend ou Employé ne<br />respecte pas son pointage</span></li>
          </ul>
        </div>
      </div>
    </section>
  );
}

/* ------------------------------------------------------------------ */
/* Laptop                                                              */
/* ------------------------------------------------------------------ */

const keyGaps = [
  { y: 1115, x: 1148, step: 44.5, n: 13 },
  { y: 1120, x: 1163, step: 45.4, n: 12 },
  { y: 1125, x: 1168, step: 46.6, n: 12 },
  { y: 1130, x: 1187, step: 47.6, n: 11 },
];
const bottomGaps = [1118, 1167, 1217, 1279, 1523, 1586, 1634, 1689, 1738];

function Keyboard() {
  return (
    <svg viewBox="990 1100 890 106" className="absolute left-[760px] top-[802px] h-[106px] w-[890px]" aria-hidden="true">
      <defs>
        <linearGradient id="deck" x1="0" y1="0" x2="1" y2="0">
          <stop offset="0" stopColor="#f4f4f6" />
          <stop offset=".06" stopColor="#d2d2d4" />
          <stop offset=".12" stopColor="#c8c8c9" />
          <stop offset=".17" stopColor="#adadae" />
          <stop offset=".32" stopColor="#c2c2c2" />
          <stop offset=".6" stopColor="#d0d0d0" />
          <stop offset=".72" stopColor="#bcbcbc" />
          <stop offset=".83" stopColor="#a9a9aa" />
          <stop offset=".87" stopColor="#bebebf" />
          <stop offset=".95" stopColor="#d6d6d8" />
          <stop offset="1" stopColor="#f4f4f6" />
        </linearGradient>
        <linearGradient id="lip" x1="0" y1="0" x2="0" y2="1">
          <stop offset="0" stopColor="#f5f5f7" />
          <stop offset=".45" stopColor="#dcdde0" />
          <stop offset=".6" stopColor="#7e8082" />
          <stop offset="1" stopColor="#6d6f70" />
        </linearGradient>
        <filter id="soft" x="-5%" y="-100%" width="110%" height="300%">
          <feGaussianBlur stdDeviation="2" />
        </filter>
      </defs>
      <path d="M1005 1194H1860L1840 1200H1025z" fill="#777" opacity=".6" filter="url(#soft)" />
      <path d="M1121 1106H1740L1866 1184H997z" fill="url(#deck)" />
      <path d="M997 1184H1867Q1868 1191 1855 1194Q1845 1196 1830 1196H1034Q1010 1196 1000 1193Q996 1190 997 1184z" fill="url(#lip)" />
      <path d="M1175 1110H1686" stroke="#a9a9a9" strokeWidth="1" strokeDasharray="1 1" />
      <path d="M1110 1113H1749L1789 1141H1068z" fill="#343436" />
      <path d="M1103 1119H1757M1094 1125H1766M1086 1130H1773M1080 1135H1781" stroke="#5d5d60" strokeWidth=".8" />
      {keyGaps.map((r) =>
        Array.from({ length: r.n }, (_, i) => {
          const x = r.x + i * r.step;
          const dx = ((x - 1429) / 340) * 3;
          return <path key={`${r.y}-${i}`} d={`M${x - dx} ${r.y}l${dx * 2} 4.500`} stroke="#e2e2e2" strokeWidth="4" />;
        }),
      )}
      {bottomGaps.map((x) => (
        <path key={x} d={`M${x - (x - 1429) / 85} 1135L${x + (x - 1429) / 85} 1141`} stroke="#e2e2e2" strokeWidth="3" />
      ))}
      <path d="M1640 1137H1685M1740 1137H1783" stroke="#e2e2e2" strokeWidth="1.500" />
      <g stroke="#77777a" strokeWidth=".6" strokeDasharray="8 38">
        <path d="M1118 1116H1740M1108 1122H1748M1100 1127H1756M1092 1132H1764" />
      </g>
      <path d="M1304 1145H1564L1583 1183H1283z" fill="#d2d2d2" stroke="#bcbcbc" strokeWidth=".7" />
      <path d="M1363 1185.500H1504V1188Q1503 1191 1498 1191H1369Q1364 1191 1363 1188z" fill="#c4c4c6" />
    </svg>
  );
}

function LoginPage() {
  return (
    <div className="flex h-[272px] font-['Liberation_Sans',sans-serif]">
      <aside className="w-[232px] shrink-0 bg-black pl-[22px] pt-[50px] text-white">
        <Logo small />
        <p className="mt-[3px] text-[11px] leading-[13px]">
          Application dédiée au pointage des
          <br />
          ressources et la gestion des conges .
        </p>
        <h2 className="mt-3 text-[11px] leading-[13px]">Page de connexion</h2>
        <p className="mt-3 text-[6px] leading-[9px]">Connectez-vous à partir d'ici pour accéder.</p>
      </aside>
      <main className="flex flex-1 flex-col items-center bg-white pt-[68px]">
        <form className="mr-[84px] flex w-[130px] flex-col text-[6px] text-[#333]" onSubmit={(e) => e.preventDefault()}>
          <h1 className="self-center font-['Comic_Sans_MS','Comic_Neue','Noto_Sans',sans-serif] text-[12px] leading-4 text-[#222]">
            S'identifier
          </h1>
          <label htmlFor="user" className="mt-[10px] leading-[8px]">Nom d'utilisateur</label>
          <input id="user" placeholder="Nom d'utilisateur" className="mt-1 h-[14px] rounded-[2px] border border-[#dfe2e5] px-1 placeholder:text-[#7b838a]" />
          <label htmlFor="pass" className="mt-[7px] leading-[8px]">Mot de passe</label>
          <input id="pass" type="password" placeholder="Mot de passe" className="mt-1 h-[14px] rounded-[2px] border border-[#dfe2e5] px-1 placeholder:text-[#7b838a]" />
          <button className="mt-[6px] h-[17px] w-[46px] self-center rounded-[2px] bg-black text-[8px] text-white">Connexion</button>
        </form>
      </main>
    </div>
  );
}

function Laptop() {
  return (
    <>
      <Keyboard />
      <section
        aria-label="Ordinateur portable"
        className="absolute left-[893px] top-[396px] h-[412px] w-[612px] bg-black pl-[14px] pr-[17px] pt-[38px] [clip-path:polygon(17px_0,593px_0,603px_4px,609px_11px,612px_20px,612px_409px,609px_412px,3px_412px,0_409px,0_15px)]"
      >
        <div className="absolute right-0 top-[38px] h-[340px] w-[17px] border-r border-[#6a6a6a] bg-linear-to-b from-[#5a5a5c] via-[#222] via-50% to-black" />
        <div className="absolute inset-x-0 bottom-0 h-[18px] bg-[#1b1c1f]" />
        <div className="relative">
          <BrowserChrome small title="Connexion" path=":8000/connexion" />
          <LoginPage />
          <div className="flex h-[15px] items-center border-t border-[#555] bg-[#1d1d1d] font-['Open_Sans',sans-serif] text-[5px] text-[#d5d5d5]">
            <button className="grid w-[18px] place-items-center"><WindowsLogo /></button>
            <label className="flex h-full w-[130px] items-center gap-1 bg-[#f2f2f2] pl-1 text-[6px] text-[#444]">
              <Search className="size-[7px] -scale-x-100" />
              <input aria-label="Rechercher" placeholder="Taper ici pour rechercher" className="min-w-0 flex-1 placeholder:text-[#444]" />
              <City className="h-[13px] w-[27px]" />
            </label>
            <div className="grid h-full w-[206px] grid-cols-11">
              {apps.map((App, i) => (
                <span
                  key={i}
                  className={`mx-px grid place-items-center ${i > 2 ? "border-b border-[#2d5f80]" : ""} ${i === 7 ? "bg-[#4a4a4a]" : ""}`}
                >
                  <span className="size-[9px]"><App /></span>
                </span>
              ))}
            </div>
            <div className="ml-auto flex items-center gap-[3px] pr-[7px]">
              <svg viewBox="0 0 16 16" className="size-[8px]" aria-hidden="true">
                <circle cx="7" cy="6" r="6" fill="#f9b934" />
                <path d="M2 15a4 4 0 0 1 1-6 5 5 0 0 1 9 1 3 3 0 0 1 1 5z" fill="#eef4fa" />
              </svg>
              <span className="whitespace-nowrap pr-[3px]">30°C&nbsp; Eclaircies</span>
              <ChevronUp className="size-[6px]" />
              <svg viewBox="0 0 36 7" className="h-[7px] w-[36px]" fill="none" stroke="#ddd" aria-hidden="true">
                <path d="M0 5q0-2 2-2 1-2 3 0 2 0 2 2z" fill="#fff" />
                <path d="M11 6V4M13 6V3M15 6V1" opacity=".7" />
                <path d="M20 2h5v4h-5zM19 1l2 2" />
                <path d="M28 2q-1 2 0 4M30 3v2M32 2q1 2 0 4" opacity=".8" />
              </svg>
              <span>FRA</span>
              <span className="text-center leading-[6px]">10:16<br />07/06/2022</span>
              <svg viewBox="0 0 16 16" className="size-[9px]" aria-hidden="true">
                <path d="M0 1h12v9H7l-3 3v-3H0z" fill="#fff" />
                <circle cx="12" cy="11" r="4.500" fill="#333" stroke="#aaa" />
              </svg>
            </div>
          </div>
        </div>
      </section>
    </>
  );
}

export default function App() {
  return (
    <div className="grid min-h-screen place-items-center overflow-hidden bg-white">
      <div className="relative h-[904px] w-[1640px]">
        <Stand />
        <Monitor />
        <Tablet />
        <Phone />
        <Laptop />
      </div>
    </div>
  );
}
